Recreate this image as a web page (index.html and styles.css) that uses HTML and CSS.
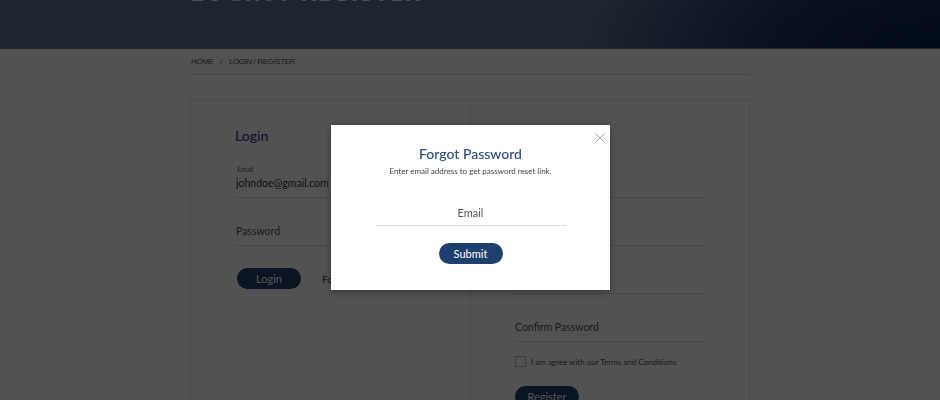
FILE: index.html
```html
<!DOCTYPE html>
<html lang="en">
<head>
    <meta charset="UTF-8">
    <meta name="viewport" content="width=device-width, initial-scale=1">
    <title>Login / Register</title>
    <link rel="stylesheet" href="styles.css">
</head>
<body>
<header class="banner">
    <div class="container">
        <h1 class="banner-title">LOGIN / REGISTER</h1>
    </div>
</header>

<div class="container">
    <nav class="breadcrumb">
        <a href="#">HOME</a>
        <span class="sep">/</span>
        <span>LOGIN / REGISTER</span>
    </nav>

    <div class="account-card">
        <!-- Login column -->
        <div class="account-col">
            <h2>Login</h2>
            <div class="field filled">
                <label>Email</label>
                <input type="text" value="johndoe@gmail.com">
            </div>
            <div class="field">
                <input type="password" placeholder="Password">
            </div>
            <div class="actions">
                <button class="btn">Login</button>
                <a href="#" class="forgot-link">Forgot Password?</a>
            </div>
        </div>

        <!-- Register column -->
        <div class="account-col divided">
            <h2>Register</h2>
            <div class="field">
                <input type="text" placeholder="Name">
            </div>
            <div class="field">
                <input type="text" placeholder="Email">
            </div>
            <div class="field">
                <input type="password" placeholder="Password">
            </div>
            <div class="field">
                <input type="password" placeholder="Confirm Password">
            </div>
            <label class="agree">
                <span class="checkbox"></span>
                <span>I am agree with our Terms and Conditions</span>
            </label>
            <button class="btn">Register</button>
        </div>
    </div>
</div>

<!-- Forgot password modal -->
<div class="backdrop">
    <div class="modal">
        <button class="modal-close" aria-label="Close">
            <svg width="10" height="10" viewBox="0 0 10 10"><path d="M0.5 0.5 L9.5 9.5 M9.5 0.5 L0.5 9.5" stroke="#a8a8a8" stroke-width="1" fill="none"/></svg>
        </button>
        <h3>Forgot Password</h3>
        <p>Enter email address to get password reset link.</p>
        <div class="modal-field">
            <input type="text" placeholder="Email">
        </div>
        <button class="btn btn-submit">Submit</button>
    </div>
</div>
</body>
</html>
```

FILE: styles.css
```css
:root {
    --navy: #2b4a80;
    --button: #1f3f6e;
    --line: #dddddd;
    --text: #444;
}

body {
    margin: 0;
    font-family: Lato, "Open Sans", sans-serif;
    background: #fff;
    color: var(--text);
}

.container {
    width: 560px;
    margin: 0 auto;
}

/* Top banner */
.banner {
    height: 48px;
    overflow: hidden;
    background:
        radial-gradient(ellipse 360px 140px at 100% 100%, #06224e 0%, #1c3560 45%, rgba(97, 116, 150, 0) 100%),
        linear-gradient(90deg, #617496 0%, #5f7398 70%, #3f5680 100%);
    border-bottom: 1px solid #6d7fa0;
}

.banner-title {
    margin: -24px 0 0;
    font-family: "Open Sans", sans-serif;
    font-size: 24.5px;
    font-weight: 700;
    letter-spacing: 1px;
    color: #f2f2f2;
    line-height: 32px;
}

/* Breadcrumb */
.breadcrumb {
    font-family: "Liberation Sans Narrow", "Liberation Sans", sans-serif;
    font-size: 8px;
    letter-spacing: -0.4px;
    color: #555;
    padding: 8px 0 8px 1px;
    border-bottom: 1px solid var(--line);
}

.breadcrumb a {
    color: #555;
    text-decoration: none;
}

.breadcrumb .sep {
    margin: 0 5px;
}

/* Login / register card */
.account-card {
    margin-top: 25px;
    border: 1px solid #e6e6e6;
    box-shadow: 0 0 4px rgba(0, 0, 0, 0.06);
    display: grid;
    grid-template-columns: 279px 1fr;
    min-height: 320px;
}

.account-col {
    padding: 26px 44px 0 45px;
}

.account-col.divided {
    border-left: 1px solid #e6e6e6;
    padding-left: 44px;
}

.account-col h2 {
    margin: 0 0 20px -1px;
    font-size: 14px;
    font-weight: 500;
    color: var(--navy);
}

.field {
    border-bottom: 1px solid var(--line);
    height: 34px;
    box-sizing: border-box;
    padding-bottom: 4px;
    margin-bottom: 14px;
    display: flex;
    flex-direction: column;
    justify-content: flex-end;
}

.field label {
    font-size: 7px;
    color: #666;
    padding-left: 1px;
}

.field input,
.modal-field input {
    border: none;
    outline: none;
    padding: 0;
    background: transparent;
    font-family: inherit;
    font-size: 10.5px;
    color: #333;
    height: 20px;
}

.field input::placeholder,
.modal-field input::placeholder {
    color: #555;
}

.actions {
    display: flex;
    align-items: center;
    gap: 21px;
    margin-top: 22px;
}

.btn {
    background: var(--button);
    color: #fff;
    border: none;
    border-radius: 20px;
    width: 64px;
    height: 21px;
    font-family: inherit;
    font-size: 11px;
    cursor: pointer;
}

.actions .btn {
    margin-left: 1px;
}

.forgot-link {
    font-size: 10px;
    color: #333;
    text-decoration: none;
}

.agree {
    display: flex;
    align-items: center;
    gap: 5px;
    font-size: 8px;
    color: #555;
    margin: 4px 0 18px;
}

.checkbox {
    width: 9px;
    height: 9px;
    border: 1px solid #bbb;
}

/* Modal */
.backdrop {
    position: fixed;
    inset: 0;
    background: rgba(0, 0, 0, 0.68);
}

.modal {
    position: relative;
    width: 279px;
    height: 165px;
    margin: 125px 0 0 331px;
    background: #fff;
    box-shadow: 0 2px 8px rgba(0, 0, 0, 0.35);
    text-align: center;
    box-sizing: border-box;
    padding-top: 20px;
}

.modal-close {
    position: absolute;
    top: 6px;
    right: 5px;
    border: none;
    background: none;
    padding: 0;
    cursor: pointer;
}

.modal h3 {
    margin: 0;
    font-size: 14px;
    font-weight: 500;
    color: var(--navy);
}

.modal p {
    margin: 4px 0 0;
    font-size: 8px;
    color: var(--text);
}

.modal-field {
    width: 190px;
    margin: 24px auto 16px;
    border-bottom: 1px solid var(--line);
}

.modal-field input {
    text-align: center;
    width: 100%;
    height: 25px;
    font-size: 11px;
}

.btn-submit {
    font-size: 11px;
}
```
